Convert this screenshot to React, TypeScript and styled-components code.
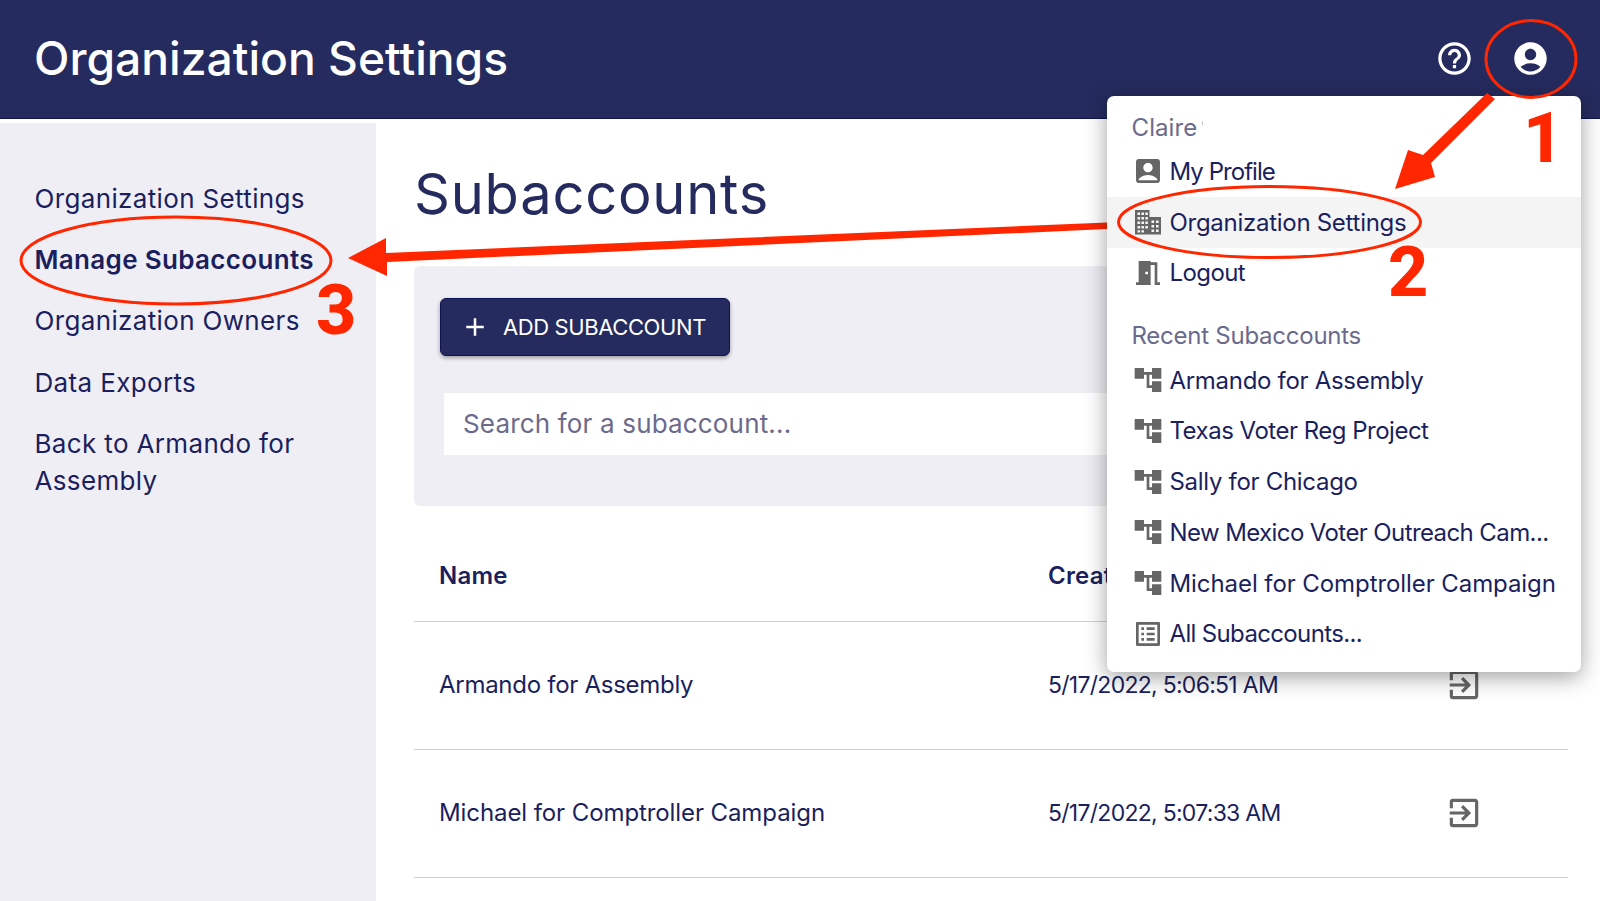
import React from "react";
import styled, { createGlobalStyle } from "styled-components";
import {
  MdHelpOutline,
  MdAccountCircle,
  MdAccountBox,
  MdMeetingRoom,
  MdAccountTree,
  MdOutlineListAlt,
  MdExitToApp,
  MdAdd,
} from "react-icons/md";

const Global = createGlobalStyle`
  html, body { margin: 0; padding: 0; background: #fff; }
  * { box-sizing: border-box; }
  body { font-family: Inter, "Liberation Sans", sans-serif; color: #1b1f5e; }
`;

const Page = styled.div`
  position: relative;
  width: 1600px;
  height: 901px;
  overflow: hidden;
  background: #fff;
`;

const Header = styled.header`
  height: 119px;
  background: #252b5e;
  border-bottom: 1px solid #0f1450;
  display: flex;
  align-items: center;
  justify-content: space-between;
  padding: 0 50px 2px 34px;
`;

const Title = styled.h1`
  margin: 0 0 1px;
  font-size: 46.2px;
  font-weight: 500;
  letter-spacing: 0;
  color: #fff;
`;

const HeaderIcons = styled.div`
  display: flex;
  align-items: center;
  gap: 37px;
  color: #fff;
`;

const Body = styled.div`
  display: flex;
  height: 782px;
`;

const Sidebar = styled.nav`
  width: 376px;
  margin-top: 4px;
  background: #efeef4;
  padding: 56.5px 30px 0 34.5px;
  display: flex;
  flex-direction: column;
`;

const SideLink = styled.a<{ $active?: boolean }>`
  display: block;
  font-size: 26px;
  line-height: 37px;
  margin-bottom: 24.4px;
  font-weight: ${(p) => (p.$active ? 600 : 400)};
  letter-spacing: ${(p) => (p.$active ? "0.33px" : "0.35px")};
  color: #1b1f5e;
`;

const Main = styled.main`
  flex: 1;
  padding: 34.5px 32px 0 39px;
  margin-left: -1px;
`;

const Heading = styled.h2`
  margin: 0 0 32px;
  font-size: 56px;
  line-height: 80px;
  font-weight: 400;
  letter-spacing: 0.78px;
  color: #252b5e;
`;

const Panel = styled.section`
  height: 240px;
  background: #efeef4;
  border-radius: 6px;
  padding: 32px 24px 0 26px;
`;

const AddButton = styled.button`
  display: flex;
  align-items: center;
  width: 290px;
  height: 58px;
  padding: 0 0 0 19px;
  gap: 13px;
  background: #252b5e;
  border: 1px solid #0f1450;
  border-radius: 6px;
  color: #fff;
  font-family: inherit;
  font-size: 22px;
  letter-spacing: -0.4px;
  box-shadow: 0 2px 4px rgba(0, 0, 0, 0.35);
`;

const SearchBox = styled.div`
  margin: 37px 0 0 4px;
  height: 62px;
  background: #fff;
  display: flex;
  align-items: center;
  padding-left: 19px;
  font-size: 26px;
  letter-spacing: 0.17px;
  color: #6c6a8c;
`;

const TableRow = styled.div<{ $head?: boolean }>`
  display: grid;
  grid-template-columns: 609px 397px 1fr;
  align-items: center;
  height: ${(p) => (p.$head ? "116.5px" : "128px")};
  padding: ${(p) => (p.$head ? "24px 0 0 25px" : "0 0 0 25px")};
  border-bottom: 1px solid #cfcfd6;
  color: #1b1f5e;
`;

const HeadCell = styled.span`
  font-size: 24px;
  font-weight: 600;
  letter-spacing: 0.22px;
`;

const NameCell = styled.span<{ $track: number }>`
  margin-top: -2px;
  font-size: 24px;
  letter-spacing: ${(p) => p.$track}px;
`;

const DateCell = styled.span`
  margin-top: -1px;
  font-size: 23px;
  letter-spacing: -0.72px;
`;

const RowIcon = styled.span`
  display: flex;
  margin-top: -2px;
  color: #666;
`;

const Dropdown = styled.div`
  position: absolute;
  left: 1106.5px;
  top: 96px;
  width: 474.5px;
  height: 576px;
  padding-top: 16.5px;
  background: #fff;
  border-radius: 7px;
  box-shadow: 0 5px 22px rgba(0, 0, 0, 0.38);
`;

const MenuLabel = styled.div<{ $spaced?: boolean; $track: number }>`
  height: 30px;
  line-height: 30px;
  margin: ${(p) => (p.$spaced ? "23px" : "0")} 0 ${(p) => (p.$spaced ? "3.5px" : "3.5px")} 25px;
  font-size: 24px;
  letter-spacing: ${(p) => p.$track}px;
  color: #6c6a8c;
`;

const Blip = styled.span`
  display: inline-block;
  width: 1px;
  height: 4px;
  margin-left: 5px;
  vertical-align: 11px;
  background: #c8c8d4;
`;

const MenuItem = styled.div<{ $active?: boolean; $track: number }>`
  display: flex;
  align-items: center;
  height: 50.75px;
  padding-left: 25px;
  gap: 6px;
  font-size: 24px;
  letter-spacing: ${(p) => p.$track}px;
  white-space: nowrap;
  color: #1b1f5e;
  background: ${(p) => (p.$active ? "#f4f4f5" : "transparent")};
  svg {
    flex: none;
    color: #666;
  }
`;

const Overlay = styled.svg`
  position: absolute;
  left: 0;
  top: 0;
  pointer-events: none;
`;

const Step = styled.span<{ $x: number; $y: number }>`
  position: absolute;
  left: ${(p) => p.$x}px;
  top: ${(p) => p.$y}px;
  font-family: Roboto, "Liberation Sans", sans-serif;
  font-size: 70px;
  line-height: 70px;
  font-weight: 800;
  color: #ff2600;
`;

const BuildingIcon = ({ size = 32 }: { size?: number }) => (
  <svg width={size} height={size} viewBox="0 0 32 32" fill="currentColor" fillRule="evenodd">
    <path d="M3 4h14.5v7H29v17.5H3V4zM5.5 6.5v2.6h2.6V6.500zM9.400 6.500v2.600h2.600V6.500zM13.300 6.500v2.600h2.600V6.500zM5.500 11v2.600h2.600V11zM9.400 11v2.600h2.600V11zM13.300 11v2.600h2.600V11zM5.500 15.500v2.600h2.600v-2.600zM9.400 15.500v2.600h2.600v-2.600zM13.300 15.500v2.600h2.600v-2.600zM5.500 20v2.600h2.600V20zM9.400 20v2.600h2.600V20zM13.300 20v2.600h2.600V20zM5.500 24.200v2.400h2.600v-2.400zM9.400 24.200v2.400h2.600v-2.400zM19.500 14.500v2.600h2.600v-2.600zM24 14.500v2.600h2.600v-2.600zM19.500 19v2.600h2.600V19zM24 19v2.600h2.600V19zM19.500 23.500v2.600h2.600v-2.600zM24 23.500v2.600h2.600v-2.600z" />
  </svg>
);

const recent = [
  { name: "Armando for Assembly", track: -0.3 },
  { name: "Texas Voter Reg Project", track: -0.5 },
  { name: "Sally for Chicago", track: -0.3 },
  { name: "New Mexico Voter Outreach Cam...", track: -0.6 },
  { name: "Michael for Comptroller Campaign", track: -0.08 },
];

const rows = [
  { name: "Armando for Assembly", date: "5/17/2022, 5:06:51 AM", track: -0.28 },
  { name: "Michael for Comptroller Campaign", date: "5/17/2022, 5:07:33 AM", track: -0.09 },
];

export default function App() {
  return (
    <Page>
      <Global />
      <Header>
        <Title>Organization Settings</Title>
        <HeaderIcons>
          <MdHelpOutline size={39} />
          <MdAccountCircle size={39} />
        </HeaderIcons>
      </Header>
      <Body>
        <Sidebar>
          <SideLink>Organization Settings</SideLink>
          <SideLink $active>Manage Subaccounts</SideLink>
          <SideLink>Organization Owners</SideLink>
          <SideLink>Data Exports</SideLink>
          <SideLink>Back to Armando for Assembly</SideLink>
        </Sidebar>
        <Main>
          <Heading>Subaccounts</Heading>
          <Panel>
            <AddButton>
              <MdAdd size={30} />
              ADD SUBACCOUNT
            </AddButton>
            <SearchBox>Search for a subaccount...</SearchBox>
          </Panel>
          <TableRow $head>
            <HeadCell>Name</HeadCell>
            <HeadCell>Created</HeadCell>
          </TableRow>
          {rows.map((r) => (
            <TableRow key={r.name}>
              <NameCell $track={r.track}>{r.name}</NameCell>
              <DateCell>{r.date}</DateCell>
              <RowIcon>
                <MdExitToApp size={38} />
              </RowIcon>
            </TableRow>
          ))}
        </Main>
      </Body>

      <Overlay width={1600} height={901} viewBox="0 0 1600 901">
        <path d="M386 253 L1107 222.500 L1107 229 L387 262 L387 276 L348 258 L386 238 Z" fill="#ff2600" />
      </Overlay>

      <Dropdown>
        <MenuLabel $track={0.1}>
          Claire
          <Blip />
        </MenuLabel>
        <MenuItem $track={-0.95}>
          <MdAccountBox size={32} />
          My Profile
        </MenuItem>
        <MenuItem $active $track={-0.28}>
          <BuildingIcon />
          Organization Settings
        </MenuItem>
        <MenuItem $track={-0.6}>
          <MdMeetingRoom size={32} />
          Logout
        </MenuItem>
        <MenuLabel $spaced $track={-0.25}>Recent Subaccounts</MenuLabel>
        {recent.map((r) => (
          <MenuItem key={r.name} $track={r.track}>
            <MdAccountTree size={32} />
            {r.name}
          </MenuItem>
        ))}
        <MenuItem $track={-0.65}>
          <MdOutlineListAlt size={32} />
          All Subaccounts...
        </MenuItem>
      </Dropdown>

      <Overlay width={1600} height={901} viewBox="0 0 1600 901" fill="none">
        <ellipse cx={1531} cy={59} rx={45} ry={38.500} stroke="#ff2600" strokeWidth={3} />
        <ellipse cx={1269.500} cy={222} rx={151} ry={35.500} stroke="#ff2600" strokeWidth={3} />
        <ellipse cx={176} cy={260.500} rx={155} ry={43.500} stroke="#ff2600" strokeWidth={3} />
        <path
          d="M1487 93 L1495 99 L1431 163 L1435 177 L1395 189 L1408 150 L1423 155 Z"
          fill="#ff2600"
        />
      </Overlay>
      <Step $x={1523} $y={103}>1</Step>
      <Step $x={1388} $y={237}>2</Step>
      <Step $x={316} $y={275}>3</Step>
    </Page>
  );
}
